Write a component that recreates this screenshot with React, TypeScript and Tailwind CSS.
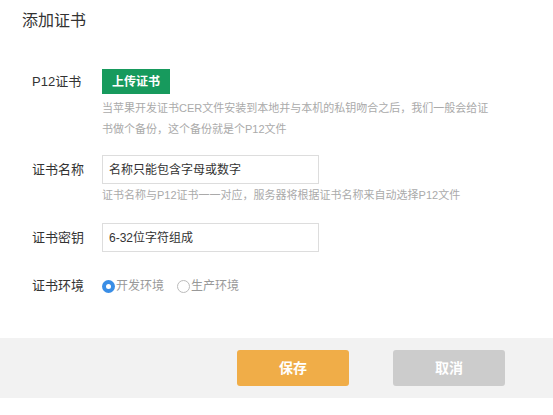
export default function App() {
  return (
    <div
      className="w-[553px] h-[415px] bg-white text-[#333] flex flex-col"
      style={{ fontFamily: '"Liberation Sans", "Noto Sans CJK SC", sans-serif' }}
    >
      <h1 className="text-[16px] leading-[22px] pl-[22px] pt-[10px] text-[#333]">添加证书</h1>

      <div className="flex flex-col pl-[32px] pt-[37px]">
        {/* P12 */}
        <div className="flex">
          <div className="w-[70px] pt-[5px] text-[13px] leading-[16px]">P12证书</div>
          <div className="flex flex-col">
            <button className="w-[68px] h-[25px] bg-[#179a5d] text-white text-[12px] font-bold">上传证书</button>
            <p className="text-[11px] leading-[21px] text-[#aaa] mt-[4px] w-[420px]">
              当苹果开发证书CER文件安装到本地并与本机的私钥吻合之后，我们一般会给证
              <br />
              书做个备份，这个备份就是个P12文件
            </p>
          </div>
        </div>

        {/* name */}
        <div className="flex mt-[15px]">
          <div className="w-[70px] pt-[7px] text-[13px] leading-[16px]">证书名称</div>
          <div className="flex flex-col">
            <div className="w-[217px] h-[29px] border border-[#ddd] flex items-center pl-[6px] text-[12px]">
              名称只能包含字母或数字
            </div>
            <p className="text-[11px] leading-[21px] text-[#aaa] mt-[1px]">
              证书名称与P12证书一一对应，服务器将根据证书名称来自动选择P12文件
            </p>
          </div>
        </div>

        {/* key */}
        <div className="flex mt-[17px] items-center">
          <div className="w-[70px] text-[13px] leading-[16px]">证书密钥</div>
          <div className="w-[217px] h-[29px] border border-[#ddd] flex items-center pl-[6px] text-[12px]">
            6-32位字符组成
          </div>
        </div>

        {/* env */}
        <div className="flex mt-[25px] items-center">
          <div className="w-[70px] text-[13px] leading-[16px]">证书环境</div>
          <div className="flex items-center text-[12px] text-[#999]">
            <span className="w-[13px] h-[13px] rounded-full bg-[#3a8ee6] flex items-center justify-center">
              <span className="w-[5px] h-[5px] rounded-full bg-white" />
            </span>
            <span className="ml-[1px]">开发环境</span>
            <span className="ml-[13px] w-[13px] h-[13px] rounded-full border border-[#bbb]" />
            <span className="ml-[1px]">生产环境</span>
          </div>
        </div>
      </div>

      <div className="mt-[43px] h-[60px] bg-[#f2f2f2] flex items-center pl-[237px] gap-[44px]">
        <button className="w-[112px] h-[36px] rounded-[3px] bg-[#f0ad48] text-white text-[14px] font-bold">保存</button>
        <button className="w-[112px] h-[36px] rounded-[3px] bg-[#cccccc] text-white text-[14px] font-bold">取消</button>
      </div>
    </div>
  );
}
